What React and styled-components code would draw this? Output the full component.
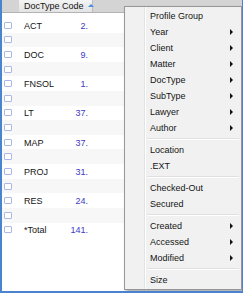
import styled, { createGlobalStyle } from 'styled-components'

const GlobalStyle = createGlobalStyle`
    html, body {
        margin: 0;
        padding: 0;
        background: #ffffff;
    }
    body {
        font-family: "Liberation Sans", "Noto Sans", sans-serif;
        font-size: 9px;
        color: #141414;
    }
`

const Frame = styled.div`
    position: relative;
    width: 243px;
    height: 293px;
    box-sizing: border-box;
    border-left: 2px solid #4a84cf;
    border-right: 1px solid #4a84cf;
    border-bottom: 2px solid #4a84cf;
    background: #ffffff;
    overflow: hidden;
`

const Header = styled.div`
    height: 12px;
    display: flex;
    background: #d4d4d4;
    border-bottom: 1px solid #b3b3b3;
`

const HeaderCell = styled.div`
    margin-left: 17px;
    width: 74px;
    padding-left: 5px;
    box-sizing: border-box;
    display: flex;
    align-items: center;
    gap: 4px;
    white-space: nowrap;
    background: linear-gradient(#f4f4f4, #e3e3e3);
    border-right: 1px solid #bcbcbc;
    line-height: 12px;
`

const SortArrow = styled.span`
    width: 0;
    height: 0;
    border-left: 3px solid transparent;
    border-right: 3px solid transparent;
    border-bottom: 3px solid #4d8fdc;
    margin-top: -1px;
`

const List = styled.div`
    padding-top: 5px;
`

const Row = styled.div`
    height: 14.62px;
    display: flex;
    align-items: center;
    padding-left: 2px;
    white-space: nowrap;
    background: ${props => props.shade ? '#f7f7f7' : '#ffffff'};
`

const Check = styled.span`
    width: 8px;
    height: 7px;
    box-sizing: border-box;
    border: 1px solid #aab8e6;
    border-radius: 1px;
    background: #ffffff;
`

const Name = styled.span`
    margin-left: 12px;
    width: 42px;
    padding-top: 1px;
`

const Count = styled.span`
    width: 22px;
    padding-top: 1px;
    text-align: right;
    color: #3a3ac4;
`

const Menu = styled.div`
    position: absolute;
    top: 6px;
    left: 122px;
    right: 0;
    padding: 1px 0;
    border: 1px solid #979797;
    background:
        linear-gradient(to right, transparent 19px, #e2e3e3 19px, #e2e3e3 20px, #ffffff 20px, #ffffff 21px, transparent 21px),
        #f1f1f1;
    box-shadow: 2px 2px 3px rgba(0, 0, 0, 0.35);
`

const Item = styled.div`
    height: 16px;
    display: flex;
    align-items: center;
    justify-content: space-between;
    padding: 0 8px 0 25px;
    white-space: nowrap;
`

const SubArrow = styled.span`
    width: 0;
    height: 0;
    border-top: 3px solid transparent;
    border-bottom: 3px solid transparent;
    border-left: 3px solid #111111;
`

const Separator = styled.div`
    height: 6px;
    display: flex;
    flex-direction: column;
    justify-content: center;
    margin: 0 2px 0 22px;

    &::before {
        content: '';
        height: 1px;
        background: #e0e0e0;
    }
    &::after {
        content: '';
        height: 1px;
        background: #ffffff;
    }
`

const docTypes = [
    { name: 'ACT', count: '2.' },
    { name: 'DOC', count: '9.' },
    { name: 'FNSOL', count: '1.' },
    { name: 'LT', count: '37.' },
    { name: 'MAP', count: '37.' },
    { name: 'PROJ', count: '31.' },
    { name: 'RES', count: '24.' },
    { name: '*Total', count: '141.' },
]

const menuGroups = [
    [
        { label: 'Profile Group' },
        { label: 'Year', sub: true },
        { label: 'Client', sub: true },
        { label: 'Matter', sub: true },
        { label: 'DocType', sub: true },
        { label: 'SubType', sub: true },
        { label: 'Lawyer', sub: true },
        { label: 'Author', sub: true },
    ],
    [{ label: 'Location' }, { label: '.EXT' }],
    [{ label: 'Checked-Out' }, { label: 'Secured' }],
    [
        { label: 'Created', sub: true },
        { label: 'Accessed', sub: true },
        { label: 'Modified', sub: true },
    ],
    [{ label: 'Size' }],
]

const App = () => {
    return (
        <>
            <GlobalStyle />
            <Frame>
                <Header>
                    <HeaderCell>
                        <span>{'DocType Code'}</span>
                        <SortArrow />
                    </HeaderCell>
                </Header>
                <List>
                    {docTypes.map((item, index) => (
                        <div key={item.name}>
                            <Row>
                                <Check />
                                <Name>{item.name}</Name>
                                <Count>{item.count}</Count>
                            </Row>
                            {index < docTypes.length - 1 && (
                                <Row shade>
                                    <Check />
                                </Row>
                            )}
                        </div>
                    ))}
                </List>
                <Menu>
                    {menuGroups.map((group, gi) => (
                        <div key={gi}>
                            {gi > 0 && <Separator />}
                            {group.map(entry => (
                                <Item key={entry.label}>
                                    <span>{entry.label}</span>
                                    {entry.sub && <SubArrow />}
                                </Item>
                            ))}
                        </div>
                    ))}
                </Menu>
            </Frame>
        </>
    )
}

export default App
